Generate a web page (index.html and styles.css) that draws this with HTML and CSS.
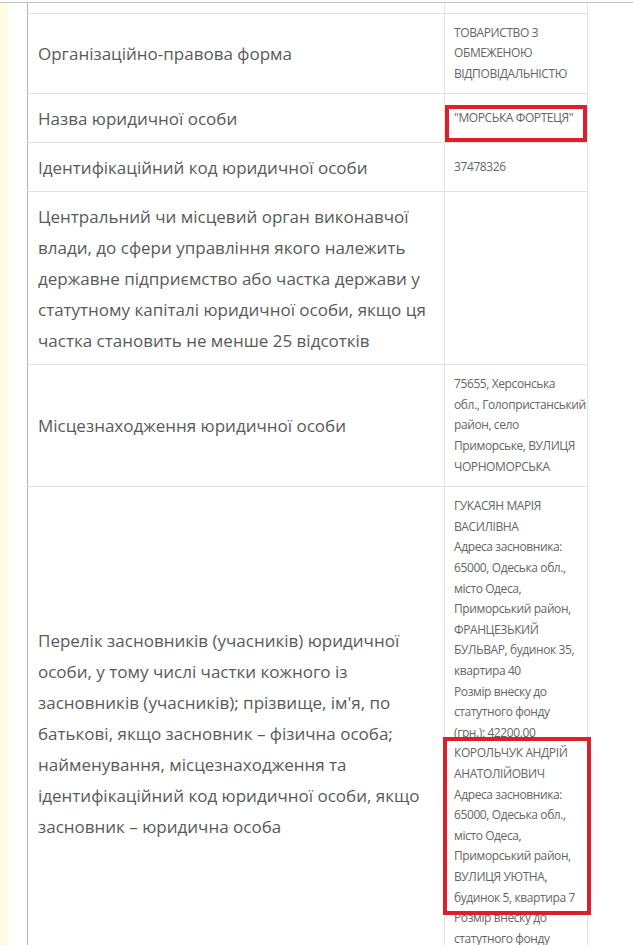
FILE: index.html
```html
<!DOCTYPE html>
<html lang="uk">
<head>
<meta charset="UTF-8">
<meta name="viewport" content="width=device-width, initial-scale=1.0">
<title>Відомості про юридичну особу</title>
<link rel="stylesheet" href="styles.css">
</head>
<body>

<div class="page">
    <div class="strip"></div>

    <div class="content">
        <table class="info">
            <colgroup>
                <col class="col-label">
                <col class="col-value">
            </colgroup>
            <tr class="cut">
                <td></td>
                <td></td>
            </tr>
            <tr>
                <td class="label">Організаційно-правова форма</td>
                <td class="value">ТОВАРИСТВО З ОБМЕЖЕНОЮ ВІДПОВІДАЛЬНІСТЮ</td>
            </tr>
            <tr>
                <td class="label">Назва юридичної особи</td>
                <td class="value"><div class="mark mark-name">"МОРСЬКА ФОРТЕЦЯ"</div></td>
            </tr>
            <tr>
                <td class="label">Ідентифікаційний код юридичної особи</td>
                <td class="value">37478326</td>
            </tr>
            <tr>
                <td class="label">Центральний чи місцевий орган виконавчої влади, до сфери управління якого належить державне підприємство або частка держави у статутному капіталі юридичної особи, якщо ця частка становить не менше 25 відсотків</td>
                <td class="value"></td>
            </tr>
            <tr>
                <td class="label">Місцезнаходження юридичної особи</td>
                <td class="value">75655, Херсонська <span class="nowrap">обл., Голопристанський</span> район, село Приморське, ВУЛИЦЯ ЧОРНОМОРСЬКА</td>
            </tr>
            <tr>
                <td class="label">Перелік засновників (учасників) юридичної особи, у тому числі частки кожного із засновників (учасників); прізвище, ім'я, по батькові, якщо засновник – фізична особа; найменування, місцезнаходження та ідентифікаційний код юридичної особи, якщо засновник – юридична особа</td>
                <td class="value">
                    <div class="founder">
                        ГУКАСЯН МАРІЯ ВАСИЛІВНА<br>
                        Адреса засновника: 65000, Одеська обл., місто Одеса, Приморський район, ФРАНЦЕЗЬКИЙ БУЛЬВАР, будинок 35, квартира 40<br>
                        Розмір внеску до статутного фонду (грн.): 42200.00
                    </div>
                    <div class="founder">
                        <div class="mark mark-founder">
                            КОРОЛЬЧУК АНДРІЙ АНАТОЛІЙОВИЧ<br>
                            Адреса засновника: 65000, Одеська обл., місто Одеса, Приморський район, ВУЛИЦЯ УЮТНА, будинок 5, квартира 7
                        </div>
                        Розмір внеску до статутного фонду (грн.): 42200.00
                    </div>
                </td>
            </tr>
        </table>
    </div>
</div>

</body>
</html>
```

FILE: styles.css
```css
*{
    box-sizing:border-box;
}

body{
    margin:0;
    background:#fff;
    font-family:"Open Sans", "Noto Sans", sans-serif;
    color:#5c5c5c;
}

.page{
    margin-top:2px;
    border-top:1px solid #c2c2c2;
    display:flex;
    min-height:100vh;
}

.strip{
    width:8px;
    flex-shrink:0;
    background:#fdfbe2;
}

.content{
    padding-left:19px;
}

.info{
    width:561px;
    table-layout:fixed;
    border-collapse:collapse;
    border-left:1px solid #b4b4b4;
}

.col-label{
    width:417px;
}

.info td{
    border:1px solid #e2e2e2;
    vertical-align:middle;
}

.info tr:first-of-type td{
    border-top:none;
}

.info td:first-child{
    border-left:none;
}

.cut td{
    height:10px;
    padding:0;
}

.label{
    padding:8.5px 10px;
    font-size:17px;
    line-height:31px;
    color:#5a5a5a;
}

.value{
    padding:9px;
    font-size:12px;
    letter-spacing:-0.4px;
    line-height:20.6px;
    color:#666;
}

.nowrap{
    white-space:nowrap;
}

/* red annotation frames */
.mark{
    position:relative;
}

.mark::before{
    content:"";
    position:absolute;
    border:4px solid #dd1f2c;
}

.mark-name::before{
    top:-3px;
    bottom:-13px;
    left:-9px;
    right:-9px;
}

.mark-founder::before{
    top:-6px;
    bottom:-7px;
    left:-11px;
    right:-13px;
}
```
